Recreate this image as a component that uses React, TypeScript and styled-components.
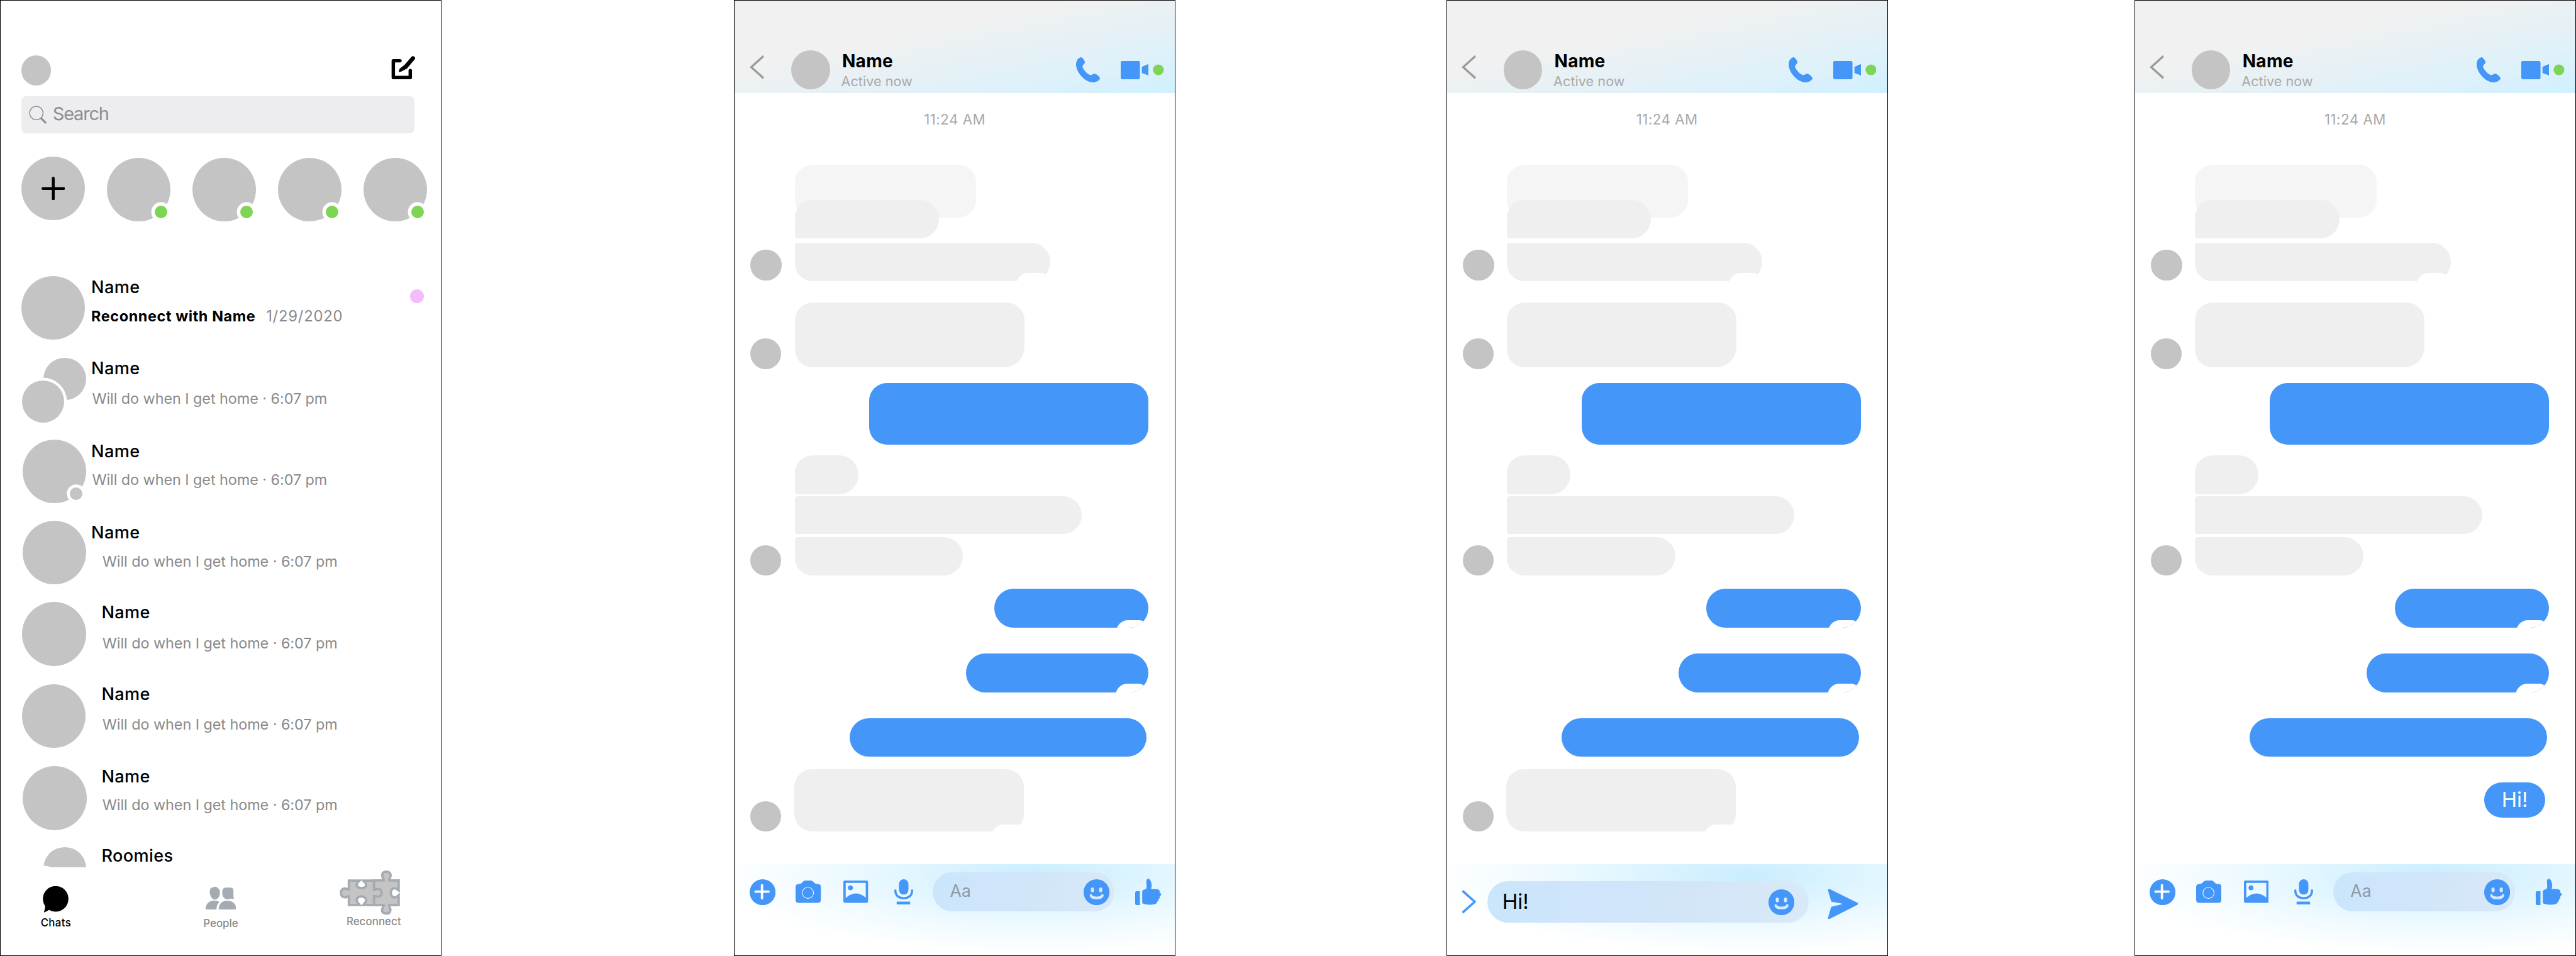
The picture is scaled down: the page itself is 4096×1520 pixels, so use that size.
import React from "react";
import styled, { createGlobalStyle } from "styled-components";

/* Artboards are drawn on a 4376px wide canvas; u() converts a canvas length to the page. */
const SCALE = 4096 / 4376;
const u = (n: number) => `${+(n * SCALE).toFixed(3)}px`;

const BLUE = "#4496f8";
const GREY = "#c4c4c4";
const GREEN = "#7ed455";

const GlobalStyle = createGlobalStyle`
  html, body { margin: 0; background: #fff; }
  *, *::before, *::after { box-sizing: border-box; }
  svg { display: block; flex: none; }
`;

const Board = styled.main`
  display: flex;
  width: 4096px;
  height: 1520px;
  overflow: hidden;
  font-family: Inter, "Liberation Sans", sans-serif;
`;

const Phone = styled.section<{ $gap?: number }>`
  flex: none;
  display: flex;
  flex-direction: column;
  width: ${u(750)};
  height: 1520px;
  margin-left: ${(p) => u(p.$gap ?? 0)};
  background: #fff;
  outline: 1px solid #000;
  outline-offset: -1px;
  overflow: hidden;
`;

interface TextProps {
  $size: number;
  $lh: number;
  $weight?: number;
  $color?: string;
  $ls?: number;
  $mt?: number;
  $ml?: number;
}
const Text = styled.span<TextProps>`
  display: block;
  width: max-content;
  white-space: pre;
  font-size: ${(p) => u(p.$size)};
  line-height: ${(p) => u(p.$lh)};
  font-weight: ${(p) => p.$weight ?? 400};
  color: ${(p) => p.$color ?? "#000"};
  letter-spacing: ${(p) => u(p.$ls ?? 0)};
  margin-top: ${(p) => u(p.$mt ?? 0)};
  margin-left: ${(p) => u(p.$ml ?? 0)};
`;

const Disc = styled.div<{ $size: number; $ml?: number; $mt?: number; $mb?: number }>`
  position: relative;
  flex: none;
  display: flex;
  align-items: center;
  justify-content: center;
  width: ${(p) => u(p.$size)};
  height: ${(p) => u(p.$size)};
  margin: ${(p) => `${u(p.$mt ?? 0)} 0 ${u(p.$mb ?? 0)} ${u(p.$ml ?? 0)}`};
  border-radius: 50%;
  background: ${GREY};
`;

const Badge = styled.i<{ $x: number; $y: number; $color: string; $ring: number; $r?: number }>`
  position: absolute;
  left: ${(p) => u(p.$x - (p.$r ?? 10.6))};
  top: ${(p) => u(p.$y - (p.$r ?? 10.6))};
  width: ${(p) => u((p.$r ?? 10.6) * 2)};
  height: ${(p) => u((p.$r ?? 10.6) * 2)};
  border-radius: 50%;
  background: ${(p) => p.$color};
  box-shadow: 0 0 0 ${(p) => u(p.$ring)} #fff;
`;

/* ---------- chat list ---------- */

const TopBar = styled.header`
  display: flex;
  justify-content: space-between;
  align-items: flex-start;
  margin: ${u(94)} ${u(45)} 0 ${u(36)};
`;

const SearchBox = styled.div`
  display: flex;
  align-items: center;
  gap: ${u(9.5)};
  width: ${u(668)};
  height: ${u(63)};
  margin: ${u(18)} 0 0 ${u(36)};
  padding-left: ${u(13)};
  border-radius: ${u(8)};
  background: #ededef;
`;

const Stories = styled.div`
  display: flex;
  gap: ${u(37.4)};
  height: ${u(110)};
  margin: ${u(40)} 0 ${u(93)} ${u(36)};
`;

const ChatList = styled.div`
  height: ${u(1004.5)};
  overflow: hidden;
`;

const ChatRow = styled.div<{ $h: number }>`
  position: relative;
  display: flex;
  align-items: flex-start;
  height: ${(p) => u(p.$h)};
`;

const AvatarCell = styled.div`
  flex: none;
  width: ${u(155)};
`;

const TextCell = styled.div`
  display: flex;
  flex-direction: column;
`;

const Line = styled.div`
  display: flex;
`;

const Unread = styled.i`
  flex: none;
  width: ${u(23)};
  height: ${u(23)};
  margin: ${u(23)} ${u(30)} 0 auto;
  border-radius: 50%;
  background: #f3bdfb;
`;

const Tabs = styled.nav`
  display: flex;
  align-items: flex-start;
  margin-left: ${u(25)};
`;

const Tab = styled.div<{ $top: number; $ml?: number }>`
  display: flex;
  flex-direction: column;
  align-items: center;
  width: ${u(140)};
  padding-top: ${(p) => u(p.$top)};
  margin-left: ${(p) => u(p.$ml ?? 0)};
`;

const IconSlot = styled.div<{ $shift?: number }>`
  margin-right: ${(p) => u(p.$shift ?? 0)};
`;

const ComposeIcon = () => (
  <svg width={u(41)} height={u(42)} viewBox="0 0 41 42" fill="none" stroke="#000" strokeLinecap="round" strokeLinejoin="round">
    <path d="M15 9.2H3.6V37.6H32.4V25.8" strokeWidth="5.8" />
    <path d="M37 5L24.5 19.5" strokeWidth="7" />
    <path d="M22.2 17.4L15.2 23L13.6 27.6L17.8 26.4L26.6 21.6Z" fill="#000" strokeWidth="1.5" />
  </svg>
);

const SearchIcon = () => (
  <svg width={u(31)} height={u(31)} viewBox="0 0 31 31" fill="none" stroke="#8e8e93" strokeLinecap="round">
    <circle cx="12.6" cy="12.6" r="11.4" strokeWidth="1.5" />
    <path d="M21 21.8L28 28.6" strokeWidth="3.4" />
  </svg>
);

const PlusIcon = () => (
  <svg width={u(40)} height={u(40)} viewBox="0 0 40 40" stroke="#000" strokeWidth="4.8" strokeLinecap="round">
    <path d="M20 2.4V37.6M2.4 20H37.6" />
  </svg>
);

const ChatsIcon = () => (
  <svg width={u(46)} height={u(45)} viewBox="0 0 46 45">
    <circle cx="23" cy="21.5" r="21.7" />
    <path d="M5.4 30Q5.6 38 3 44.6Q8 43 12 40Q14 40 17 42L20 30Z" />
  </svg>
);

const PeopleIcon = () => (
  <svg width={u(52)} height={u(40)} viewBox="0 0 52 40" fill="#a4abb3">
    <path d="M7 9Q7.4 3 11 2.4Q17-1 20 2.6Q24.6 5 24.4 11C24.4 18 20 22.8 15.6 22.8S7 17 7 9Z" />
    <path d="M28.2 8Q29 2.4 35 2.4H42Q47.4 2.4 47.2 8V17Q47.4 20.4 48.6 21.3L42 21.2Q39 22.6 35.6 22C31 21 28.2 17 28.2 12Z" />
    <path d="M0 39.5C0 30 6 24.4 14.8 24.4C18 24.4 21 25.2 23.2 27C20 30 18.6 34 18.4 39.5Z" />
    <path d="M22 39.5C22.2 30 28 24.6 37 24.6C46 24.6 52 30.4 52 39.5Z" />
  </svg>
);

const PuzzleIcon = () => (
  <svg width={u(102.7)} height={u(75.3)} viewBox="50 56 308 226" fill={GREY} stroke="#a4abb3" strokeWidth="12">
    <path d="M225 107H276C277 98 267 94 267 82Q268 62 288 62Q309 62 310 82C310 94 300 98 302 107H351V158C343 152 340 146 331 146Q311 148 311 170Q311 192 331 194C340 194 343 188 351 182V233H302C300 242 309 246 309 256Q308 276 288 276Q266 276 266 256C266 246 277 242 275 233H225Z" />
    <path d="M97 108H152C147 115 137 117 137 128Q138 146 161 146Q185 146 185 128C185 117 175 115 170 108H225V155C233 155 236 150 246 150Q264 151 264 170Q264 189 246 190C236 190 233 186 225 186V232H170C175 225 185 219 185 208Q184 189 161 189Q138 189 137 208C137 219 147 225 152 232H97V188C90 187 88 193 76 193Q57 192 57 170Q57 149 76 148C88 148 90 154 97 153Z" />
  </svg>
);

const NAME = { $size: 29, $lh: 36, $weight: 500, $ls: 0.4 };
const NOTE = { $size: 25, $lh: 32, $color: "#8a8a8a", $ls: -0.06 };
const MESSAGE = "Will do when I get home · 6:07 pm";

interface Chat {
  h: number;
  x: number;
  size?: number;
  nameTop: number;
  gap: number;
  nameX?: number;
  noteX?: number;
  kind?: "group" | "status";
}
const chats: Chat[] = [
  { h: 139, x: 37, nameTop: -0.4, gap: 17.3, noteX: 1.5, kind: "group" },
  { h: 138, x: 38, nameTop: 1.6, gap: 14.3, noteX: 1.5, kind: "status" },
  { h: 138, x: 38, nameTop: 1.6, gap: 15.1, noteX: 19 },
  { h: 139, x: 37, size: 109, nameTop: 0, gap: 17.7, nameX: 17.5, noteX: 19 },
  { h: 139, x: 37, nameTop: -0.4, gap: 17.6, nameX: 17.5, noteX: 19 },
  { h: 138, x: 38, size: 109, nameTop: 0.4, gap: 14.5, nameX: 17.5, noteX: 19 },
];

const GroupAvatar = () => (
  <Disc $size={72} $ml={74}>
    <Badge $x={-1} $y={74} $r={36} $color={GREY} $ring={4.8} />
  </Disc>
);

const ChatListScreen = () => (
  <Phone>
    <TopBar>
      <Disc $size={51} />
      <ComposeIcon />
    </TopBar>
    <SearchBox>
      <SearchIcon />
      <Text $size={31} $lh={38} $color="#8e8e93" $ls={-1.3} $mt={-2}>Search</Text>
    </SearchBox>
    <Stories>
      <Disc $size={108}>
        <PlusIcon />
      </Disc>
      {[0, 1, 2, 3].map((i) => (
        <Disc key={i} $size={108} $mt={2}>
          <Badge $x={92} $y={92.3} $color={GREEN} $ring={5.8} />
        </Disc>
      ))}
    </Stories>
    <ChatList>
      <ChatRow $h={139}>
        <AvatarCell>
          <Disc $size={108} $ml={36} />
        </AvatarCell>
        <TextCell>
          <Text {...NAME} $mt={0.6}>Name</Text>
          <Line>
            <Text {...NOTE} $weight={700} $color="#000" $ls={0.65} $mt={15.3}>Reconnect with Name</Text>
            <Text {...NOTE} $size={25.5} $ls={0.8} $mt={15.3} $ml={18}>1/29/2020</Text>
          </Line>
        </TextCell>
        <Unread />
      </ChatRow>
      {chats.map((c, i) => (
        <ChatRow key={i} $h={c.h}>
          <AvatarCell>
            {c.kind === "group" ? (
              <GroupAvatar />
            ) : (
              <Disc $size={c.size ?? 108} $ml={c.x}>
                {c.kind === "status" && <Badge $x={91.4} $y={91.3} $color={GREY} $ring={5} />}
              </Disc>
            )}
          </AvatarCell>
          <TextCell>
            <Text {...NAME} $mt={c.nameTop} $ml={c.nameX}>Name</Text>
            <Text {...NOTE} $mt={c.gap} $ml={c.noteX}>{MESSAGE}</Text>
          </TextCell>
        </ChatRow>
      ))}
      <ChatRow $h={34.5}>
        <AvatarCell>
          <Disc $size={72} $ml={74}>
            <Badge $x={-1} $y={72} $r={36} $color={GREY} $ring={4.8} />
          </Disc>
        </AvatarCell>
        <Text {...NAME} $mt={-2.8} $ml={17.5}>Roomies</Text>
      </ChatRow>
    </ChatList>
    <Tabs>
      <Tab $top={31.5}>
        <IconSlot><ChatsIcon /></IconSlot>
        <Text $size={18} $lh={24} $weight={500} $ls={0.4} $mt={5.4}>Chats</Text>
      </Tab>
      <Tab $top={32} $ml={140}>
        <IconSlot><PeopleIcon /></IconSlot>
        <Text $size={18} $lh={24} $weight={500} $color="#8a8a8a" $mt={10.9}>People</Text>
      </Tab>
      <Tab $top={5.2} $ml={120}>
        <IconSlot $shift={14}><PuzzleIcon /></IconSlot>
        <Text $size={18} $lh={24} $weight={500} $color="#8a8a8a" $ls={0.1} $mt={-0.8}>Reconnect</Text>
      </Tab>
    </Tabs>
  </Phone>
);

/* ---------- conversation ---------- */

const ThreadHeader = styled.header`
  display: flex;
  align-items: flex-start;
  flex: none;
  height: ${u(158)};
  padding: ${u(86)} ${u(19.7)} 0 ${u(26)};
  background: linear-gradient(to bottom right, #f2f1f1 0%, #f1f1f1 38%, #e9f1f4 54%, #def1fa 78%, #d0f0ff 100%);
`;

const HeaderText = styled.div`
  flex: 1;
  margin: ${u(2)} 0 0 ${u(19)};
`;

const HeaderIcon = styled.div<{ $mt: number; $ml?: number }>`
  margin: ${(p) => u(p.$mt)} 0 0 ${(p) => u(p.$ml ?? 0)};
`;

const TimeStamp = styled.div`
  display: flex;
  justify-content: center;
  margin: ${u(30.6)} 0 ${u(63.4)};
`;

const Incoming = styled.div<{ $mt?: number }>`
  display: flex;
  align-items: flex-end;
  gap: ${u(23)};
  padding-left: ${u(28)};
  margin-top: ${(p) => u(p.$mt ?? 0)};
`;

const Stack = styled.div`
  display: flex;
  flex-direction: column;
  align-items: flex-start;
`;

const Outgoing = styled.div<{ $mt: number; $right?: number }>`
  display: flex;
  justify-content: flex-end;
  margin-top: ${(p) => u(p.$mt)};
  padding-right: ${(p) => u(p.$right ?? 46)};
`;

const Bubble = styled.div<{ $w: number; $h: number; $r: number[]; $bg?: string; $mt?: number; $ml?: number }>`
  position: relative;
  display: flex;
  align-items: center;
  justify-content: center;
  width: ${(p) => u(p.$w)};
  height: ${(p) => u(p.$h)};
  margin-top: ${(p) => u(p.$mt ?? 0)};
  margin-left: ${(p) => u(p.$ml ?? 0)};
  border-radius: ${(p) => p.$r.map(u).join(" ")};
  background: ${(p) => p.$bg ?? "#efefef"};
  overflow: hidden;
`;

const Notch = styled.i<{ $x: number; $y: number; $w: number }>`
  position: absolute;
  left: ${(p) => u(p.$x)};
  top: ${(p) => u(p.$y)};
  width: ${(p) => u(p.$w)};
  height: ${u(40)};
  border-radius: ${u(20)};
  background: #fff;
`;

const Composer = styled.footer`
  flex: none;
  height: ${u(156)};
  margin-top: auto;
  background: radial-gradient(ellipse ${u(540)} ${u(135)} at ${u(514)} ${u(19)}, #c8edff 0%, #d4f1ff 18%, #e2f6ff 42%, #f2fbff 70%, #fff 100%);
`;

const ComposerRow = styled.div<{ $top: number }>`
  display: flex;
  align-items: center;
  padding: ${(p) => u(p.$top)} 0 0 ${u(26)};
`;

const Slot = styled.div<{ $ml?: number; $mt?: number }>`
  margin-left: ${(p) => u(p.$ml ?? 0)};
  margin-top: ${(p) => u(p.$mt ?? 0)};
`;

const Input = styled.div<{ $w: number; $h: number; $ml: number; $pl: number; $pr: number }>`
  flex: none;
  display: flex;
  align-items: center;
  justify-content: space-between;
  width: ${(p) => u(p.$w)};
  height: ${(p) => u(p.$h)};
  margin-left: ${(p) => u(p.$ml)};
  padding: 0 ${(p) => u(p.$pr)} 0 ${(p) => u(p.$pl)};
  border-radius: ${u(36)};
  background: linear-gradient(100deg, #cae6fb 0%, #cfe5fb 30%, #d3e6f8 65%, #d9e9f8 100%);
`;

const BackIcon = () => (
  <svg width={u(25)} height={u(40)} viewBox="0 0 25 40" fill="none" stroke="#9b9b9b" strokeWidth="3.6">
    <path d="M23.4 1.4L2.6 20L23.4 38.6" />
  </svg>
);

const ExpandIcon = () => (
  <svg width={u(25)} height={u(40)} viewBox="0 0 25 40" fill="none" stroke={BLUE} strokeWidth="3.8" strokeLinejoin="round">
    <path d="M1.6 1.4L22.4 20L1.6 38.6" />
  </svg>
);

const PhoneIcon = () => (
  <svg width={u(41)} height={u(42.7)} viewBox="0 0 123 128" fill={BLUE}>
    <path d="M25 0C33 1 45 18 45 26C45 34 33 38 33 49C35 62 60 90 74 91C82 91 88 83 97 84C104 85 122 101 122 108C121 116 103 128 88 128C42 128 0 74 0 36C0 18 12 2 25 0Z" />
  </svg>
);

const VideoIcon = () => (
  <svg width={u(73.3)} height={u(31)} viewBox="0 0 220 93" fill={BLUE}>
    <rect width="98" height="93" rx="8" />
    <path d="M108 30L141 15V74L108 61Z" />
    <circle cx="192" cy="45" r="27.5" fill={GREEN} />
  </svg>
);

const AddIcon = () => (
  <svg width={u(44)} height={u(44)} viewBox="0 0 132 132">
    <circle cx="66" cy="66" r="66" fill={BLUE} />
    <path d="M63 30V97M30 63H96" stroke="#fafdff" strokeWidth="12" strokeLinecap="round" />
  </svg>
);

const CameraIcon = () => (
  <svg width={u(43)} height={u(38)} viewBox="0 0 129 114">
    <path fill={BLUE} d="M16 18C30 17 32 12 38 6Q43 0 50 0H78Q84 0 90 6C97 13 100 18 114 18Q129 19 129 33V98Q129 114 113 114H16Q0 114 0 98V33Q0 19 16 18Z" />
    <circle cx="63" cy="63" r="28.5" fill="none" stroke="#eefaff" strokeWidth="3.4" />
  </svg>
);

const ImageIcon = () => (
  <svg width={u(42)} height={u(38)} viewBox="0 0 126 114" fill={BLUE}>
    <path fillRule="evenodd" d="M8 0H118Q126 0 126 8V106Q126 114 118 114H8Q0 114 0 106V8Q0 0 8 0ZM12 12V88Q64 44 114 87V12Z" />
    <circle cx="36" cy="37" r="12.5" />
  </svg>
);

const MicIcon = () => (
  <svg width={u(32)} height={u(43)} viewBox="0 0 96 129" fill={BLUE}>
    <rect x="24" width="48" height="78" rx="24" />
    <path d="M5.6 56.5V60C6 84 25 96.5 48 96.5S90 84 90.4 60V56.5" fill="none" stroke={BLUE} strokeWidth="11" strokeLinecap="round" />
    <rect x="12" y="114" width="69" height="15" />
  </svg>
);

const SmileIcon = () => (
  <svg width={u(44)} height={u(44)} viewBox="0 0 132 132">
    <circle cx="66" cy="66" r="66" fill={BLUE} />
    <g fill="#d6e9fb">
      <ellipse cx="45" cy="54" rx="8.6" ry="12.4" />
      <ellipse cx="87" cy="54" rx="8.6" ry="12.4" />
      <path d="M31 79Q36 72 42 78C43 92 90 92 90 78Q97 72 102 79C104 94 88 102 66 102S30 94 31 79Z" />
    </g>
  </svg>
);

const LikeIcon = () => (
  <svg width={u(44.3)} height={u(45.3)} viewBox="0 0 133 136" fill={BLUE}>
    <path d="M8 64H24V135H8Q0 135 0 127V72Q0 64 8 64Z" />
    <path d="M36 64Q37 57 55 53C61 45 57 30 57 14C58 4 62 0 67 0C76 1 84 20 84 36C84 44 81 48 82 53C95 53 108 52 117 55Q127 59 125 66Q120 69 127 72Q134 77 132 83Q131 89 124 90Q129 97 122 103Q116 104 119 108Q121 114 113 116Q114 124 103 129Q75 137 50 130Q38 130 36 122Z" />
  </svg>
);

const SendIcon = () => (
  <svg width={u(53)} height={u(52)} viewBox="0 0 53 52" fill={BLUE} stroke={BLUE} strokeWidth="4" strokeLinejoin="round">
    <path d="M2.6 2.4L49.6 25.6L2.6 49.6L7.8 32.4L25 28.4Q28 26 25 23.4L7.8 20.2Z" />
  </svg>
);

const Toolbar = () => (
  <ComposerRow $top={14}>
    <Slot $mt={2}><AddIcon /></Slot>
    <Slot $ml={35}><CameraIcon /></Slot>
    <Slot $ml={38}><ImageIcon /></Slot>
    <Slot $ml={44}><MicIcon /></Slot>
    <Input $w={308} $h={66} $ml={34} $pl={29} $pr={8}>
      <Text $size={28.4} $lh={36} $color="#8b99a6" $mt={-2}>Aa</Text>
      <Slot $mt={2}><SmileIcon /></Slot>
    </Input>
    <Slot $ml={36}><LikeIcon /></Slot>
  </ComposerRow>
);

const Draft = () => (
  <ComposerRow $top={29}>
    <Slot><ExpandIcon /></Slot>
    <Input $w={546} $h={70} $ml={19} $pl={25} $pr={25}>
      <Text $size={35.5} $lh={44} $mt={-1}>Hi!</Text>
      <Slot $mt={2}><SmileIcon /></Slot>
    </Input>
    <Slot $ml={32} $mt={8}><SendIcon /></Slot>
  </ComposerRow>
);

const LONG = [30, 30, 30, 30];
const FIRST = [30, 33, 33, 5];
const MIDDLE = [5, 33, 33, 5];
const LAST = [5, 33, 33, 30];
const PILL = [33, 33, 33, 33];

const Thread = ({ gap, mode }: { gap: number; mode: "idle" | "draft" | "sent" }) => (
  <Phone $gap={gap}>
    <ThreadHeader>
      <HeaderIcon $mt={8.5}><BackIcon /></HeaderIcon>
      <Disc $size={66} $ml={46} />
      <HeaderText>
        <Text $size={30} $lh={34} $weight={700} $ls={0.3} $ml={1.5}>Name</Text>
        <Text $size={23} $lh={28} $color="#a9a9a9" $ls={0.1} $mt={1.6}>Active now</Text>
      </HeaderText>
      <HeaderIcon $mt={11}><PhoneIcon /></HeaderIcon>
      <HeaderIcon $mt={18} $ml={35}><VideoIcon /></HeaderIcon>
    </ThreadHeader>
    <TimeStamp>
      <Text $size={23.8} $lh={28} $color="#a8a8a8" $ls={0.55}>11:24 AM</Text>
    </TimeStamp>
    <Incoming>
      <Disc $size={53} $mb={1} />
      <Stack>
        <Bubble $w={308} $h={90} $r={LONG} $bg="#f5f5f5" $ml={-1} />
        <Bubble $w={245} $h={65} $r={FIRST} $mt={-30} $ml={-1} />
        <Bubble $w={434} $h={66} $r={LAST} $mt={7} $ml={-1}>
          <Notch $x={377} $y={52} $w={59} />
        </Bubble>
      </Stack>
    </Incoming>
    <Incoming $mt={36}>
      <Disc $size={52} $mb={-3} />
      <Bubble $w={390} $h={110} $r={[30, 30, 34, 30]} />
    </Incoming>
    <Outgoing $mt={27}>
      <Bubble $w={474} $h={104} $r={LONG} $bg={BLUE} />
    </Outgoing>
    <Incoming $mt={19}>
      <Disc $size={52} />
      <Stack>
        <Bubble $w={108} $h={66} $r={FIRST} />
        <Bubble $w={488} $h={64} $r={MIDDLE} $mt={3} />
        <Bubble $w={286} $h={66} $r={LAST} $mt={5} />
      </Stack>
    </Incoming>
    <Outgoing $mt={22}>
      <Bubble $w={262} $h={66} $r={PILL} $bg={BLUE}>
        <Notch $x={207} $y={54} $w={58} />
      </Bubble>
    </Outgoing>
    <Outgoing $mt={44}>
      <Bubble $w={310} $h={66} $r={PILL} $bg={BLUE}>
        <Notch $x={254} $y={52} $w={58} />
      </Bubble>
    </Outgoing>
    <Outgoing $mt={44} $right={49}>
      <Bubble $w={505} $h={65} $r={PILL} $bg={BLUE} />
    </Outgoing>
    {mode === "sent" ? (
      <Outgoing $mt={44} $right={52}>
        <Bubble $w={104} $h={60} $r={LONG} $bg={BLUE}>
          <Text $size={35} $lh={44} $color="#fff" $mt={-1}>Hi!</Text>
        </Bubble>
      </Outgoing>
    ) : (
      <Incoming $mt={22}>
        <Disc $size={52} />
        <Bubble $w={390} $h={106} $r={LONG} $ml={-1}>
          <Notch $x={336} $y={94} $w={80} />
        </Bubble>
      </Incoming>
    )}
    <Composer>{mode === "draft" ? <Draft /> : <Toolbar />}</Composer>
  </Phone>
);

export default function App() {
  return (
    <>
      <GlobalStyle />
      <Board>
        <ChatListScreen />
        <Thread gap={497} mode="idle" />
        <Thread gap={460} mode="draft" />
        <Thread gap={419} mode="sent" />
      </Board>
    </>
  );
}
